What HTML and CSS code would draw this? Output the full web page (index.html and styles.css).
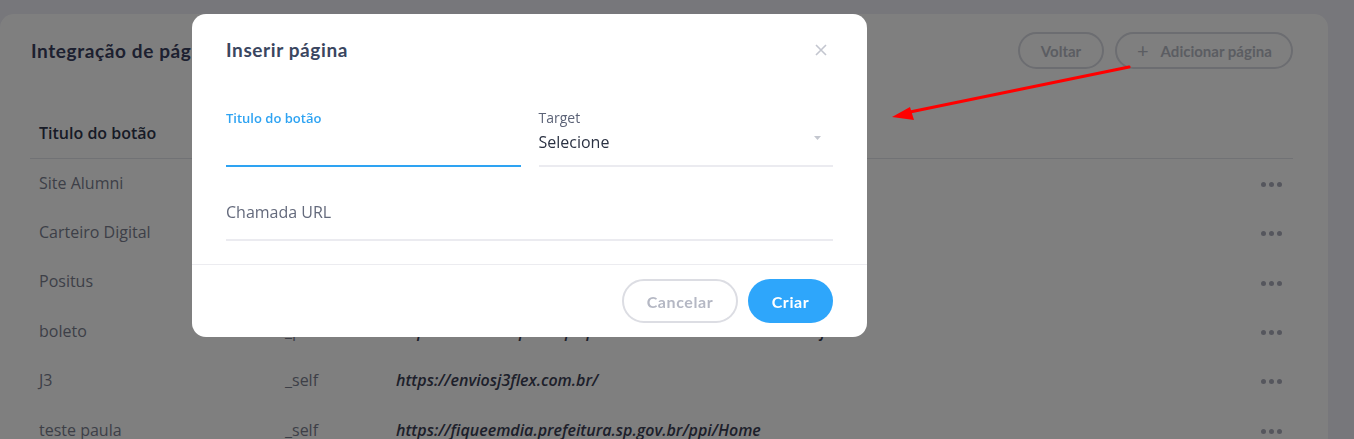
FILE: index.html
```html
<!DOCTYPE html>
<html lang="pt-BR">
<head>
<meta charset="utf-8">
<title>Integração de páginas</title>
<link rel="stylesheet" href="styles.css">
</head>
<body>
<div class="page">
  <section class="card">
    <header class="card-head">
      <h1 class="card-title">Integração de páginas</h1>
      <div class="head-actions">
        <button class="pill">Voltar</button>
        <button class="pill pill-add"><span class="plus">+</span>Adicionar página</button>
      </div>
    </header>
    <table class="grid">
      <thead>
        <tr><th class="c1">Titulo do botão</th><th class="c2">Target</th><th class="c3">Chamada URL</th><th class="c4"></th></tr>
      </thead>
      <tbody>
        <tr><td class="c1">Site Alumni</td><td class="c2">_blank</td><td class="c3 url">https://alumni.com.br/</td><td class="c4"><span class="dots"><i></i><i></i><i></i></span></td></tr>
        <tr><td class="c1">Carteiro Digital</td><td class="c2">_blank</td><td class="c3 url">https://carteirodigital.com.br/</td><td class="c4"><span class="dots"><i></i><i></i><i></i></span></td></tr>
        <tr><td class="c1">Positus</td><td class="c2">_blank</td><td class="c3 url">https://positus.global/</td><td class="c4"><span class="dots"><i></i><i></i><i></i></span></td></tr>
        <tr><td class="c1">boleto</td><td class="c2">_parent</td><td class="c3 url">https://www.ahhpmail.pt/portal/caminho/emitir/boleto-.cfm</td><td class="c4"><span class="dots"><i></i><i></i><i></i></span></td></tr>
        <tr><td class="c1">J3</td><td class="c2">_self</td><td class="c3 url">https://enviosj3flex.com.br/</td><td class="c4"><span class="dots"><i></i><i></i><i></i></span></td></tr>
        <tr><td class="c1">teste paula</td><td class="c2">_self</td><td class="c3 url">https://fiqueemdia.prefeitura.sp.gov.br/ppi/Home</td><td class="c4"><span class="dots"><i></i><i></i><i></i></span></td></tr>
      </tbody>
    </table>
  </section>
</div>

<div class="overlay"></div>

<div class="modal">
  <div class="modal-head">
    <h2 class="modal-title">Inserir página</h2>
    <button class="close" aria-label="Fechar">
      <svg width="12" height="12" viewBox="0 0 12 12"><path d="M1 1L11 11M11 1L1 11" stroke="#c3c6cf" stroke-width="1.6" fill="none"/></svg>
    </button>
  </div>
  <div class="modal-body">
    <div class="row">
      <div class="field field-active">
        <label class="label label-active">Titulo do botão</label>
        <div class="input"></div>
      </div>
      <div class="field">
        <label class="label">Target</label>
        <div class="select"><span>Selecione</span>
          <svg class="caret" width="7" height="4" viewBox="0 0 7 4"><path d="M0 0H7L3.5 4Z" fill="#c4c7cf"/></svg>
        </div>
      </div>
    </div>
    <div class="field field-full">
      <div class="input input-ph">Chamada URL</div>
    </div>
  </div>
  <div class="modal-foot">
    <button class="btn btn-cancel">Cancelar</button>
    <button class="btn btn-primary">Criar</button>
  </div>
</div>

<svg class="arrow" width="260" height="70" viewBox="880 60 260 70">
  <line x1="1129" y1="67" x2="905" y2="113" stroke="#ff0000" stroke-width="3.2" stroke-linecap="round"/>
  <path d="M892 117 L910 107 L914 120 Z" fill="#ff0000"/>
</svg>
</body>
</html>
```

FILE: styles.css
```css
* { box-sizing: border-box; }

html, body {
  margin: 0;
  padding: 0;
  height: 100%;
}

body {
  background: #eeeef6;
  font-family: "Open Sans", "Liberation Sans", sans-serif;
  overflow: hidden;
}

.page {
  padding: 14px 26px 0 0;
}

.card {
  background: #ffffff;
  border-radius: 14px;
  padding: 18px 35px 0 30px;
  min-height: 600px;
}

.card-head {
  display: flex;
  align-items: center;
  justify-content: space-between;
  height: 37px;
  margin-bottom: 39px;
}

.card-title {
  margin: 0 0 0 1px;
  font-family: Lato, "Open Sans", sans-serif;
  font-weight: 700;
  font-size: 19px;
  letter-spacing: 0.6px;
  color: #3a4160;
}

.head-actions {
  display: flex;
  gap: 11px;
}

.pill {
  height: 37px;
  border: 2px solid #d8dae2;
  border-radius: 20px;
  background: #fff;
  font-family: Lato, "Open Sans", sans-serif;
  font-weight: 700;
  font-size: 15px;
  color: #b7bac5;
  padding: 0 22px;
  display: flex;
  align-items: center;
}

.pill:first-child { width: 86px; justify-content: center; padding: 0; }
.pill-add { width: 178px; padding: 0 0 0 20px; }

.plus {
  font-size: 20px;
  font-weight: 400;
  margin-right: 12px;
  line-height: 1;
  position: relative;
  top: -1px;
}

.grid {
  width: 100%;
  border-collapse: collapse;
  font-size: 16px;
}

.grid th {
  height: 50px;
  text-align: left;
  font-weight: 600;
  color: #2f364d;
  border-bottom: 1px solid #e3e4ea;
  padding: 0 0 0 9px;
}

.grid td {
  height: 49.4px;
  padding: 0 0 0 9px;
  color: #7a7f8f;
  white-space: nowrap;
}

.c1 { width: 246px; }
.c2 { width: 111px; }
.grid td.url {
  font-style: italic;
  font-weight: 600;
  color: #3a4055;
}
.c4 { width: 60px; text-align: right; padding-right: 11px !important; }

.dots {
  display: inline-flex;
  gap: 3px;
  vertical-align: middle;
}
.dots i {
  width: 5px;
  height: 5px;
  border-radius: 50%;
  background: #aaadbb;
  display: block;
}

.overlay {
  position: fixed;
  inset: 0;
  background: rgba(0, 0, 0, 0.5);
}

.modal {
  position: absolute;
  left: 192px;
  top: 14px;
  width: 675px;
  height: 323px;
  background: #fff;
  border-radius: 14px;
  display: flex;
  flex-direction: column;
}

.modal-head {
  display: flex;
  align-items: center;
  justify-content: space-between;
  padding: 24px 40px 0 34px;
  height: 24px;
  box-sizing: content-box;
}

.modal-title {
  margin: 0;
  font-family: Lato, "Open Sans", sans-serif;
  font-weight: 700;
  font-size: 19px;
  letter-spacing: 0.6px;
  line-height: 24px;
  color: #3a4660;
}

.close {
  border: 0;
  background: none;
  padding: 0;
  width: 12px;
  height: 12px;
  display: block;
}
.close svg { display: block; }

.modal-body {
  padding: 48px 34px 23px 34px;
  flex: 1;
  border-bottom: 1px solid #ececf0;
}

.row {
  display: flex;
  gap: 18px;
}

.field { flex: 1; }

.label {
  display: block;
  font-size: 14px;
  line-height: 16px;
  color: #5c6377;
}

.label-active {
  color: #2ea3f2;
  font-size: 13px;
  font-weight: 600;
}

.field-active .input {
  height: 41px;
  border-bottom: 2px solid #2ea3f2;
}

.select {
  display: flex;
  align-items: center;
  justify-content: space-between;
  padding: 4px 12px 11px 0;
  height: 41px;
  border-bottom: 2px solid #ebebf0;
  font-size: 16px;
  line-height: 24px;
  color: #2b3243;
}
.caret { position: relative; top: -4px; }

.field-full {
  margin-top: 20px;
}

.input-ph {
  padding: 13px 0 15px;
  line-height: 24px;
  font-size: 16px;
  color: #646a7c;
  border-bottom: 2px solid #ebebf0;
}

.modal-foot {
  display: flex;
  justify-content: flex-end;
  gap: 10px;
  padding: 14px 34px 14px;
}

.btn {
  height: 44px;
  border-radius: 22px;
  font-family: Lato, "Open Sans", sans-serif;
  font-weight: 700;
  font-size: 16px;
  letter-spacing: 0.6px;
}

.btn-cancel {
  width: 116px;
  background: #fff;
  border: 2px solid #dcdde3;
  color: #b5b8c4;
}

.btn-primary {
  width: 85px;
  background: #2ea6fb;
  border: 0;
  color: #fff;
}

.arrow {
  position: absolute;
  left: 880px;
  top: 60px;
}
```
